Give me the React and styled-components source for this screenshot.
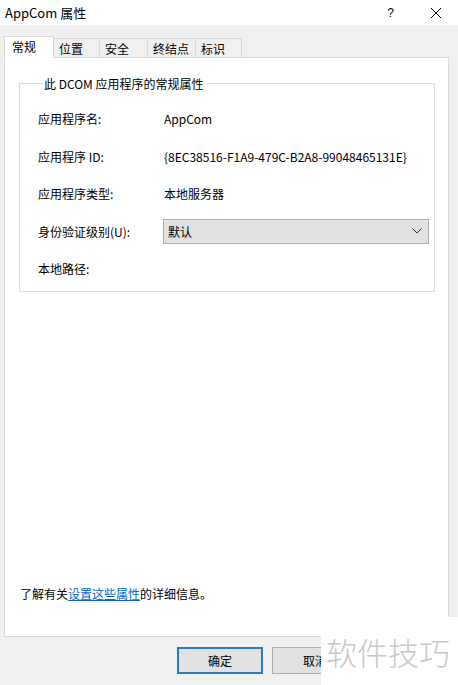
import React from 'react';
import styled, {createGlobalStyle} from 'styled-components';

const GlobalStyle = createGlobalStyle`
	html, body {
		margin: 0;
		padding: 0;
		background: #f0f0f0;
	}
	body {
		font-family: 'Noto Sans CJK SC', 'Noto Sans', sans-serif;
		font-size: 12px;
		color: #000;
	}
`;

const tabs = [
	{name: '常规', w: 50},
	{name: '位置', w: 47},
	{name: '安全', w: 49},
	{name: '终结点', w: 49},
	{name: '标识', w: 47},
];

const rows = [
	{label: '应用程序名:', value: 'AppCom'},
	{label: '应用程序 ID:', value: '{8EC38516-F1A9-479C-B2A8-99048465131E}'},
	{label: '应用程序类型:', value: '本地服务器'},
	{label: '身份验证级别(U):', select: '默认'},
	{label: '本地路径:', value: ''},
];

function App() {
	return (
		<Window>
			<GlobalStyle />
			<TitleBar>
				<Title>AppCom 属性</Title>
				<TitleButtons>
					<HelpBtn>?</HelpBtn>
					<CloseIcon width='12' height='12' viewBox='0 0 12 12'>
						<path d='M1 1L11 11M11 1L1 11' stroke='#000' strokeWidth='1' />
					</CloseIcon>
				</TitleButtons>
			</TitleBar>
			<Body>
				<TabStrip>
					{tabs.map((t, i) => (
						<Tab key={t.name} active={i === 0} w={t.w}>
							{t.name}
						</Tab>
					))}
				</TabStrip>
				<Panel>
					<Group>
						<Legend>此 DCOM 应用程序的常规属性</Legend>
						{rows.map((r) => (
							<Row key={r.label}>
								<Label>{r.label}</Label>
								{r.select ? (
									<Select>
										<span>{r.select}</span>
										<svg width='10' height='6' viewBox='0 0 10 6'>
											<path d='M0.5 0.5L5 5L9.5 0.5' fill='none' stroke='#333' strokeWidth='1' />
										</svg>
									</Select>
								) : (
									<Value>{r.value}</Value>
								)}
							</Row>
						))}
					</Group>
					<Spacer />
					<Info>
						了解有关<Link>设置这些属性</Link>的详细信息。
					</Info>
				</Panel>
				<Footer>
					<Button primary>确定</Button>
					<Button>取消</Button>
				</Footer>
			</Body>
			<Watermark>软件技巧</Watermark>
		</Window>
	);
}

export default App;

const Window = styled.div`
	position: relative;
	width: 458px;
	height: 685px;
	background: #f0f0f0;
	overflow: hidden;
`;

const TitleBar = styled.div`
	height: 25px;
	background: #fff;
	display: flex;
	align-items: center;
	justify-content: space-between;
	padding: 0 16px 0 5px;
	box-sizing: border-box;
`;

const Title = styled.div`
	font-size: 13px;
	line-height: 1;
`;

const TitleButtons = styled.div`
	display: flex;
	align-items: center;
	gap: 36px;
`;

const HelpBtn = styled.span`
	font-family: 'Liberation Sans', sans-serif;
	font-size: 12px;
`;

const CloseIcon = styled.svg`
	display: block;
`;

const Body = styled.div`
	padding: 11px 9px 0 4px;
	display: flex;
	flex-direction: column;
`;

const TabStrip = styled.div`
	display: flex;
	align-items: flex-end;
	height: 22px;
	position: relative;
	z-index: 1;
	margin-bottom: -1px;
`;

const Tab = styled.div`
	box-sizing: border-box;
	width: ${(p) => p.w}px;
	height: ${(p) => (p.active ? '22px' : '20px')};
	padding: 0 0 0 ${(p) => (p.active ? '7px' : '5px')};
	background: ${(p) => (p.active ? '#fff' : '#f0f0f0')};
	border: 1px solid #d9d9d9;
	border-bottom: ${(p) => (p.active ? '1px solid #fff' : '1px solid #d9d9d9')};
	margin-left: ${(p) => (p.active ? '0' : '-1px')};
	display: flex;
	align-items: center;
	font-size: 12px;
	line-height: 1;
	padding-top: ${(p) => (p.active ? '0' : '2px')};
`;

const Panel = styled.div`
	box-sizing: border-box;
	height: 580px;
	background: #fff;
	border: 1px solid #d9d9d9;
	padding: 17px 13px 0 14px;
	display: flex;
	flex-direction: column;
`;

const Group = styled.fieldset`
	margin: 0;
	border: 1px solid #dcdcdc;
	padding: 8px 0 10px 18px;
	height: 217px;
	box-sizing: border-box;
`;

const Legend = styled.legend`
	padding: 0 2px 0 1px;
	margin-left: 5px;
	font-size: 12px;
`;

const Row = styled.div`
	display: flex;
	align-items: center;
	height: 37.5px;
`;

const Label = styled.div`
	width: 126px;
	flex-shrink: 0;
`;

const Value = styled.div`
	white-space: nowrap;
`;

const Select = styled.div`
	box-sizing: border-box;
	width: 266px;
	height: 25px;
	margin-left: -1px;
	background: #e1e1e1;
	border: 1px solid #adadad;
	display: flex;
	align-items: center;
	justify-content: space-between;
	padding: 0 6px 0 4px;
`;

const Spacer = styled.div`
	flex: 1;
`;

const Info = styled.div`
	margin-left: 1px;
	margin-bottom: 34px;
`;

const Link = styled.span`
	color: #0066cc;
	text-decoration: underline;
`;

const Footer = styled.div`
	display: flex;
	gap: 9px;
	padding: 10px 0 0 173px;
`;

const Button = styled.div`
	box-sizing: border-box;
	width: 86px;
	height: 27px;
	background: #e1e1e1;
	border: ${(p) => (p.primary ? '2px solid #2b78c5' : '1px solid #adadad')};
	display: flex;
	align-items: center;
	justify-content: center;
`;

const Watermark = styled.div`
	position: absolute;
	left: 321px;
	top: 617px;
	right: 0;
	bottom: 0;
	background: #fff;
	color: #c8c8c8;
	font-size: 31px;
	font-weight: 300;
	display: flex;
	align-items: center;
	padding-left: 5px;
	white-space: nowrap;
`;
